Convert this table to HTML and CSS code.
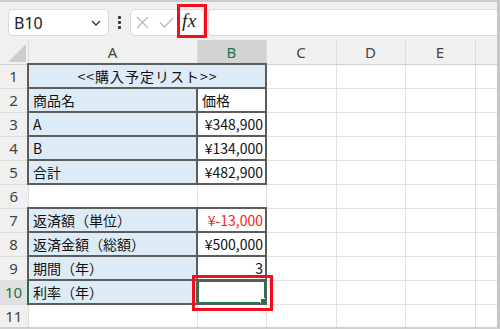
FILE: index.html
```html
<!DOCTYPE html>
<html lang="ja">
<head>
<meta charset="utf-8">
<title>Excel</title>
<link rel="stylesheet" href="styles.css">
</head>
<body>
<div class="app">
  <div class="toolbar">
    <div class="namebox">
      <span class="nb-text">B10</span>
      <svg class="chev" width="10" height="6" viewBox="0 0 10 6"><path d="M1 1 L5 5 L9 1" fill="none" stroke="#333" stroke-width="1.3"/></svg>
    </div>
    <div class="kebab"><span></span><span></span><span></span></div>
    <div class="fgroup">
      <svg class="ico" width="13" height="13" viewBox="0 0 13 13"><path d="M1 1 L12 12 M12 1 L1 12" stroke="#b9b9b9" stroke-width="1.3" fill="none"/></svg>
      <svg class="ico" width="15" height="11" viewBox="0 0 15 11"><path d="M1 5.5 L5.5 10 L14 1" stroke="#b9b9b9" stroke-width="1.3" fill="none"/></svg>
      <span class="fx">fx</span>
    </div>
    <div class="finput"></div>
  </div>
  <table class="sheet">
    <colgroup>
      <col class="c-rh"><col class="c-a"><col class="c-b"><col class="c-c"><col class="c-d"><col class="c-e"><col class="c-f">
    </colgroup>
    <tr class="hdr">
      <th class="corner"><svg width="18" height="18" viewBox="0 0 18 18"><polygon points="18,0 18,18 0,18" fill="#cdcdcd"/></svg></th>
      <th>A</th><th class="sel">B</th><th>C</th><th>D</th><th>E</th><th></th>
    </tr>
    <tr><th>1</th><td class="d blue center title" colspan="2">&lt;&lt;購入予定リスト&gt;&gt;</td><td></td><td></td><td></td><td></td></tr>
    <tr><th>2</th><td class="d blue">商品名</td><td class="d">価格</td><td></td><td></td><td></td><td></td></tr>
    <tr><th>3</th><td class="d blue">A</td><td class="d num">¥348,900</td><td></td><td></td><td></td><td></td></tr>
    <tr><th>4</th><td class="d blue">B</td><td class="d num">¥134,000</td><td></td><td></td><td></td><td></td></tr>
    <tr><th>5</th><td class="d blue">合計</td><td class="d num">¥482,900</td><td></td><td></td><td></td><td></td></tr>
    <tr><th>6</th><td></td><td></td><td></td><td></td><td></td><td></td></tr>
    <tr><th>7</th><td class="d blue">返済額（単位）</td><td class="d num red">¥-13,000</td><td></td><td></td><td></td><td></td></tr>
    <tr><th>8</th><td class="d blue">返済金額（総額）</td><td class="d num">¥500,000</td><td></td><td></td><td></td><td></td></tr>
    <tr><th>9</th><td class="d blue">期間（年）</td><td class="d num">3</td><td></td><td></td><td></td><td></td></tr>
    <tr><th class="sel-row">10</th><td class="d blue">利率（年）</td><td class="d active"><span class="cursor"><span class="handle"></span></span></td><td></td><td></td><td></td><td></td></tr>
    <tr><th>11</th><td></td><td></td><td></td><td></td><td></td><td></td></tr>
  </table>
  <div class="callout callout-fx"></div>
  <div class="callout callout-cell"></div>
</div>
</body>
</html>
```

FILE: styles.css
```css
html, body {
  margin: 0;
  padding: 0;
  background: #ffffff;
}
body {
  width: 500px;
  height: 329px;
  overflow: hidden;
  font-family: "Noto Sans", "Noto Sans CJK JP", sans-serif;
}
.app {
  position: relative;
  width: 500px;
  height: 329px;
  box-sizing: border-box;
  background: #f0f0f0;
  border-top: 2px solid #cbcbcb;
  border-right: 3px solid #c6c6c6;
  border-bottom: 2px solid #d0d0d0;
  overflow: hidden;
}
.toolbar {
  display: flex;
  align-items: center;
  height: 38px;
  padding: 0 0 0 8px;
  box-sizing: border-box;
}
.namebox {
  width: 101px;
  height: 27px;
  box-sizing: border-box;
  background: #fff;
  border: 1px solid #dadada;
  border-radius: 5px;
  display: flex;
  align-items: center;
  justify-content: space-between;
  padding: 0 7px 0 5px;
  margin-top: 3px;
}
.nb-text {
  font-size: 16px;
  color: #222;
  font-family: "Noto Sans", sans-serif;
}
.kebab {
  width: 21px;
  display: flex;
  flex-direction: column;
  align-items: center;
  gap: 2px;
  margin-top: 3px;
}
.kebab span {
  width: 3px;
  height: 3px;
  background: #333;
  border-radius: 1px;
}
.fgroup {
  width: 74px;
  height: 27px;
  box-sizing: border-box;
  background: #fff;
  border: 1px solid #dadada;
  border-radius: 5px;
  display: flex;
  align-items: center;
  padding-left: 5px;
  gap: 10px;
  margin-top: 3px;
}
.fx {
  font-family: "Liberation Serif", "DejaVu Serif", serif;
  font-style: italic;
  font-size: 19px;
  line-height: 20px;
  color: #1a1a1a;
  margin-left: -2px;
  margin-top: -3px;
  letter-spacing: 0.5px;
}
.finput {
  flex: 1;
  height: 27px;
  margin-left: 4px;
  margin-top: 3px;
  background: #fff;
  border: 1px solid #dadada;
  border-right: none;
  border-radius: 5px 0 0 5px;
  box-sizing: border-box;
}
.sheet {
  border-collapse: collapse;
  table-layout: fixed;
  width: 497px;
  background: #fff;
}
.c-rh { width: 28px; }
.c-a { width: 169px; }
.c-b { width: 69px; }
.c-c { width: 70px; }
.c-d { width: 69px; }
.c-e { width: 70px; }
.c-f { width: 22px; }
.sheet tr { height: 24px; }
.sheet th {
  background: #f0f0f0;
  font-weight: normal;
  font-family: "Noto Sans", sans-serif;
  font-size: 15px;
  color: #444;
  padding: 0;
  border: 1px solid #dcdcdc;
  text-align: center;
  line-height: 22px;
}
.sheet tr.hdr th {
  border-top: none;
  border-bottom: 1px solid #d0d0d0;
}
.sheet th.corner {
  text-align: right;
  vertical-align: bottom;
  padding: 0;
  line-height: 0;
  border-left: none;
}
.sheet th.corner svg {
  margin: 0 2px 2px 0;
}
.sheet th.sel {
  background: #d3d3d3;
  color: #217346;
  border-bottom: 2px solid #217346;
}
.sheet th.sel-row {
  background: #e0e0e0;
  color: #217346;
  border-right: 2px solid #217346;
}
.sheet tr th:first-child { border-left: none; }
.sheet td {
  border: 1px solid #e1e1e1;
  padding: 0 3px 0 4px;
  font-family: "Noto Sans CJK JP", "Noto Sans", sans-serif;
  font-size: 14px;
  color: #111;
  line-height: 20px;
  white-space: nowrap;
  overflow: hidden;
}
.sheet td.d {
  border: 2px solid #5c5c5c;
}
.sheet td.blue { background: #ddebf7; }
.sheet td.center { text-align: center; }
.sheet td.title { letter-spacing: 1px; }
.sheet td.num { text-align: right; padding-right: 2px; }
.sheet td.red { color: #ff1a1a; }
.sheet td.active {
  position: relative;
  padding: 0;
}
.cursor {
  position: absolute;
  left: -1px;
  top: -1px;
  right: -1px;
  bottom: -1px;
  border: 2px solid #217346;
}
.handle {
  position: absolute;
  right: -3px;
  bottom: -3px;
  width: 5px;
  height: 5px;
  background: #217346;
  border: 1px solid #fff;
}
.callout {
  position: absolute;
  border: 3px solid #f00f1a;
  box-sizing: border-box;
}
.callout-fx {
  left: 177px;
  top: 2px;
  width: 30px;
  height: 34px;
}
.callout-cell {
  left: 192px;
  top: 273px;
  width: 81px;
  height: 36px;
}
```
